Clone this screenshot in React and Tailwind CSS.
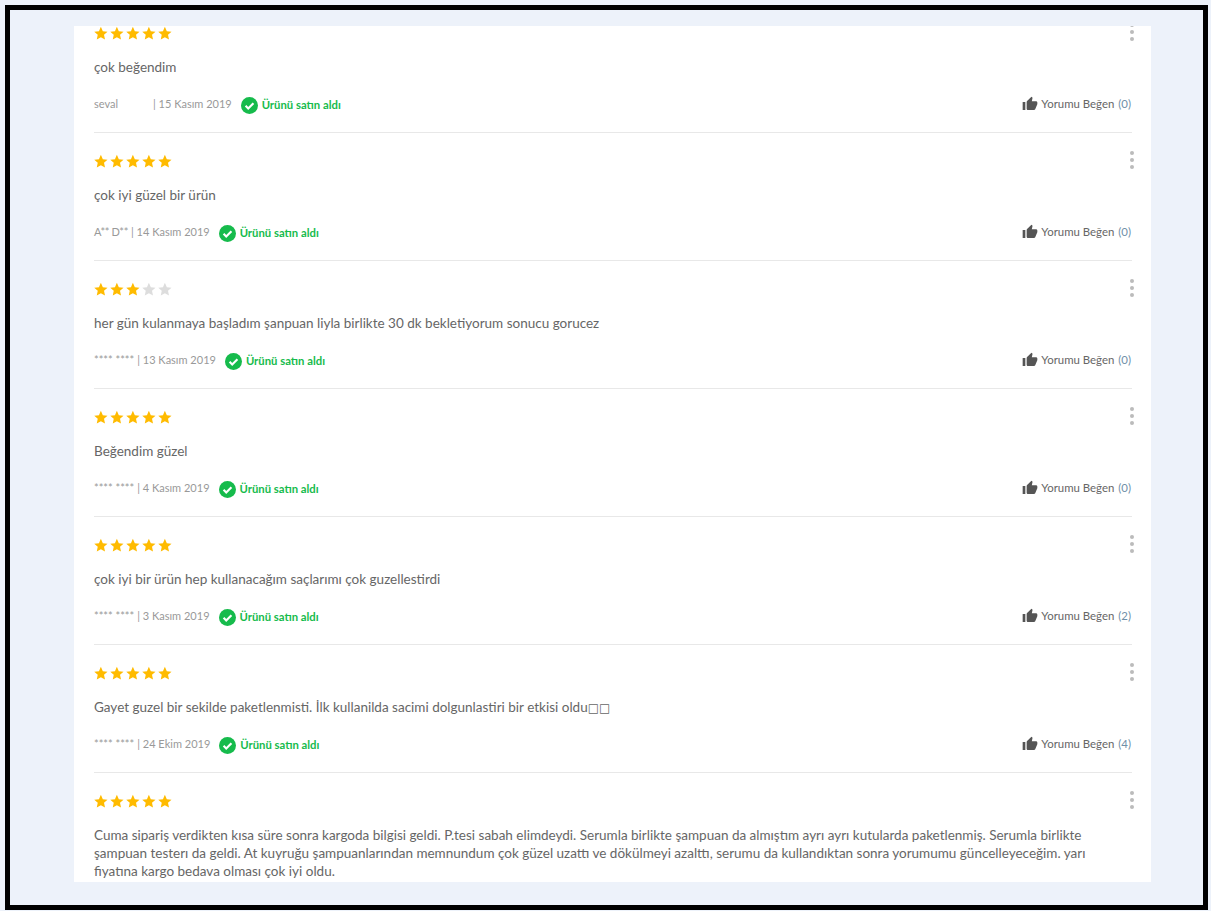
import React from "react";

const REVIEWS = [
  { rating: 5, text: "çok beğendim", author: "seval", authorClass: "w-[56px]", date: "15 Kasım 2019", likes: 0 },
  { rating: 5, text: "çok iyi güzel bir ürün", author: "A** D**", authorClass: "w-[34px] tracking-[-0.4px]", date: "14 Kasım 2019", likes: 0 },
  { rating: 3, text: "her gün kulanmaya başladım şanpuan liyla birlikte 30 dk bekletiyorum sonucu gorucez", author: "**** ****", date: "13 Kasım 2019", likes: 0 },
  { rating: 5, text: "Beğendim güzel", author: "**** ****", date: "4 Kasım 2019", likes: 0 },
  { rating: 5, text: "çok iyi bir ürün hep kullanacağım saçlarımı çok guzellestirdi", author: "**** ****", date: "3 Kasım 2019", likes: 2 },
  { rating: 5, text: "Gayet guzel bir sekilde paketlenmisti. İlk kullanilda sacimi dolgunlastiri bir etkisi oldu", tofu: "□□", author: "**** ****", date: "24 Ekim 2019", likes: 4 },
];

function Star({ on }) {
  return (
    <svg viewBox="0 0 24 24" className={"w-[15px] h-[15px] mr-px " + (on ? "text-[#ffbb00]" : "text-[#dddddd]")} fill="currentColor">
      <path d="M11 1.200l3.100 7 7.500.8-5.600 5.100 1.600 7.500L11 18l-6.600 3.600 1.600-7.500L.4 9l7.500-.8z" />
    </svg>
  );
}

function Stars({ rating }) {
  return (
    <div className="flex items-end h-4">
      {[1, 2, 3, 4, 5].map((n) => (
        <Star key={n} on={n <= rating} />
      ))}
    </div>
  );
}

function Dots() {
  return (
    <div className="flex flex-col gap-[3px] mt-[-2px] mr-[-2px]">
      <span className="w-1 h-1 rounded-full bg-[#bbbbbb]" />
      <span className="w-1 h-1 rounded-full bg-[#bbbbbb]" />
      <span className="w-1 h-1 rounded-full bg-[#bbbbbb]" />
    </div>
  );
}

function Verified() {
  return (
    <span className="flex items-center gap-[4px] ml-[9px] mt-[2px] text-[11.300px] font-bold text-[#16bb4c]">
      <svg viewBox="0 0 16 16" className="w-[17px] h-[17px] shrink-0">
        <circle cx="8" cy="8" r="8" fill="#16bb4c" />
        <path d="M4.300 8.300l2.500 2.500 4.900-5" fill="none" stroke="#ffffff" strokeWidth="2" />
      </svg>
      Ürünü satın aldı
    </span>
  );
}

function Review({ review, first }) {
  return (
    <div className={"h-[128px] border-b border-[#e8e8e8] " + (first ? "mt-[-21px]" : "")}>
      <div className="flex justify-between pt-[20px]">
        <Stars rating={review.rating} />
        <Dots />
      </div>
      <p className="mt-[16px] h-[20px] text-[13.500px] leading-[20px] text-[#666666]">
        {review.text}
        {review.tofu && <span className="font-['DejaVu_Sans'] text-[12px]">{review.tofu}</span>}
      </p>
      <div className="flex justify-between items-center mt-[18px] h-[18px]">
        <div className="flex items-center text-[11px] text-[#999999]">
          <span className={"whitespace-nowrap " + (review.authorClass || "")}>{review.author}</span>
          <span className="ml-[3px]">| {review.date}</span>
          <Verified />
        </div>
        <div className="flex items-center mr-px text-[11.400px] text-[#666666]">
          <svg viewBox="0 0 24 24" className="w-4 h-4 mr-[3px] text-[#555555]" fill="currentColor">
            <path d="M1 21h4V9H1v12zm22-11c0-1.100-.9-2-2-2h-6.300l1-4.600v-.3c0-.4-.2-.8-.4-1.100L14.200 1 7.600 7.600C7.200 8 7 8.500 7 9v10c0 1.100.9 2 2 2h9c.8 0 1.500-.5 1.800-1.200l3-7.100c.1-.2.2-.5.2-.7v-2z" />
          </svg>
          Yorumu Beğen
          <span className="ml-[4px] text-[#6f8fa8]">({review.likes})</span>
        </div>
      </div>
    </div>
  );
}

export default function App() {
  return (
    <div className="h-[911px] w-[1211px] pt-[5px] pl-[5px] pr-[3px] pb-[1px] bg-[#edf2fa] font-['Lato','Noto_Sans',sans-serif]">
      <div className="h-full border-[5px] border-black bg-[#edf2fa] pt-[16px] pl-[64px] pr-[52px]">
        <div className="h-[856px] bg-white overflow-hidden pl-[20px] pr-[19px]">
          {REVIEWS.map((r, i) => (
            <Review key={i} review={r} first={i === 0} />
          ))}
          <div className="flex justify-between pt-[20px]">
            <Stars rating={5} />
            <Dots />
          </div>
          <p className="mt-[17px] text-[13.500px] leading-[18px] text-[#666666]">
            Cuma sipariş verdikten kısa süre sonra kargoda bilgisi geldi. P.tesi sabah elimdeydi. Serumla birlikte şampuan da almıştım ayrı ayrı kutularda paketlenmiş. Serumla birlikte şampuan testerı da geldi. At kuyruğu şampuanlarından memnundum çok güzel uzattı ve dökülmeyi azalttı, serumu da kullandıktan sonra yorumumu güncelleyeceğim. yarı fiyatına kargo bedava olması çok iyi oldu.
          </p>
        </div>
      </div>
    </div>
  );
}
